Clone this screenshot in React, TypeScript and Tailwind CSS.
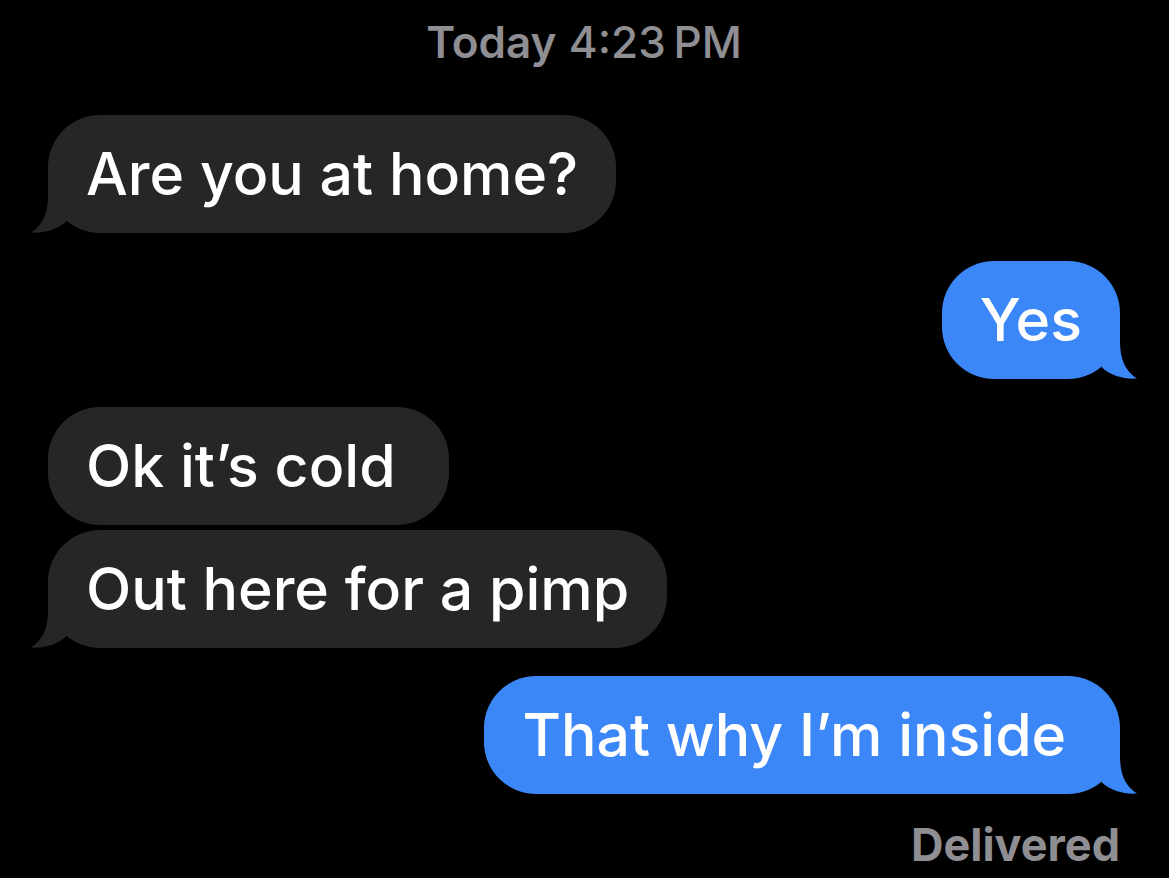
import React from 'react';

type Side = 'left' | 'right';

interface Message {
  id: number;
  text: string;
  side: Side;
  tail: boolean;
  gap: string;
}

const messages: Message[] = [
  { id: 1, text: 'Are you at home?', side: 'left', tail: true, gap: 'mt-[51px]' },
  { id: 2, text: 'Yes', side: 'right', tail: true, gap: 'mt-[28px]' },
  { id: 3, text: 'Ok it\u2019s cold ', side: 'left', tail: false, gap: 'mt-[28px]' },
  { id: 4, text: 'Out here for a pimp', side: 'left', tail: true, gap: 'mt-[5px]' },
  { id: 5, text: 'That why I\u2019m inside ', side: 'right', tail: true, gap: 'mt-[28px]' },
];

// iMessage style tail, drawn for the left side and mirrored for the right
const Tail: React.FC<{ side: Side; color: string }> = ({ side, color }) => (
  <svg
    width="50"
    height="50"
    viewBox="0 0 50 50"
    className={`absolute bottom-0 ${side === 'left' ? '-left-[17px]' : '-right-[17px] -scale-x-100'}`}
  >
    <path d="M17,0 L17,12 C17,30 12,42 0,49.5 C12,50.5 26,47 35,38.5 L35,0 Z" fill={color} />
  </svg>
);

const Bubble: React.FC<{ msg: Message }> = ({ msg }) => {
  const isMe = msg.side === 'right';
  const color = isMe ? '#3b87f7' : '#262628';
  return (
    <div className={`flex ${isMe ? 'justify-end' : 'justify-start'} ${msg.gap}`}>
      <div
        className={`relative flex h-[118px] items-center rounded-[52px] px-[38px] text-[59px] font-medium leading-[70px] text-white ${
          isMe ? 'bg-[#3b87f7]' : 'bg-[#262628]'
        }`}
      >
        {msg.tail && <Tail side={msg.side} color={color} />}
        <span className="relative whitespace-pre">{msg.text}</span>
      </div>
    </div>
  );
};

export default function App() {
  return (
    <div
      className="min-h-[878px] w-full bg-black pl-[48px] pr-[49px] pt-[20px]"
      style={{ fontFamily: 'Inter, "Liberation Sans", sans-serif' }}
    >
      <div className="text-center text-[44px] leading-[44px] text-[#8e8e93]">
        <span className="font-semibold">Today</span>{' '}
        <span className="font-medium">4:23&thinsp;PM</span>
      </div>

      {messages.map(msg => (
        <Bubble key={msg.id} msg={msg} />
      ))}

      <div className="mt-[28px] text-right text-[45px] font-bold leading-[45px] text-[#8e8e93]">
        Delivered
      </div>
    </div>
  );
}
